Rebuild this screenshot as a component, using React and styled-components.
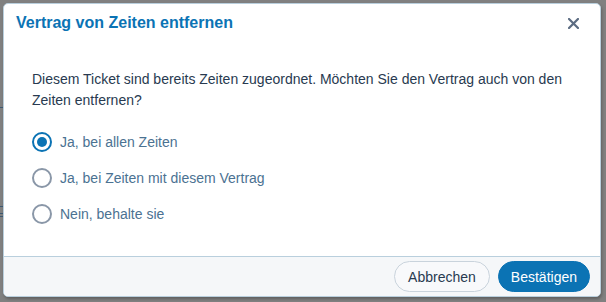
import React, { useState } from "react";
import styled, { createGlobalStyle } from "styled-components";

const Global = createGlobalStyle`
  html, body { margin: 0; padding: 0; }
  body {
    width: 606px; height: 302px; overflow: hidden;
    background: #808080;
    font-family: "Liberation Sans", Arial, sans-serif;
  }
`;

const Backdrop = styled.div`
  position: relative;
  width: 606px;
  height: 302px;
  box-sizing: border-box;
  padding: 3px 5px 5px 3px;
  display: flex;
`;

const Mark = styled.div`
  position: absolute;
  left: 0;
  width: 3px;
  height: 1px;
  background: #3d5870;
`;

const Dialog = styled.div`
  flex: 1;
  display: flex;
  flex-direction: column;
  background: #fff;
  border: 1px solid #b9cfdd;
  border-radius: 5px;
  overflow: hidden;
  box-shadow: 1px 2px 3px rgba(0, 0, 0, 0.25);
`;

const Header = styled.div`
  display: flex;
  align-items: center;
  justify-content: space-between;
  padding: 6px 20px 0 12px;
  height: 26px;
`;

const Title = styled.h2`
  margin: 0;
  font-size: 16px;
  font-weight: bold;
  color: #0b73b4;
`;

const Close = styled.button`
  border: 0;
  background: none;
  padding: 0;
  width: 14px;
  height: 14px;
  display: flex;
  align-items: center;
  justify-content: center;
  cursor: pointer;
`;

const Body = styled.div`
  flex: 1;
  padding: 33px 30px 0 28px;
`;

const Text = styled.p`
  margin: 0;
  font-size: 14px;
  line-height: 21px;
  color: #283a50;
`;

const Options = styled.div`
  display: flex;
  flex-direction: column;
  gap: 12px;
  margin-top: 19px;
`;

const Option = styled.label`
  display: flex;
  align-items: center;
  gap: 8px;
  height: 24px;
  font-size: 14px;
  color: #4b7292;
  cursor: pointer;
`;

const Circle = styled.span`
  box-sizing: border-box;
  width: 20px;
  height: 20px;
  border-radius: 50%;
  border: 2px solid ${(p) => (p.$on ? "#0b73b4" : "#8a97a8")};
  display: flex;
  align-items: center;
  justify-content: center;
  &::after {
    content: "";
    width: 10px;
    height: 10px;
    border-radius: 50%;
    background: ${(p) => (p.$on ? "#0b73b4" : "transparent")};
  }
`;

const Footer = styled.div`
  height: 39px;
  background: #f5f7f9;
  border-top: 1px solid #b9cfdd;
  display: flex;
  align-items: center;
  justify-content: flex-end;
  gap: 8px;
  padding: 0 10px 0 0;
`;

const Button = styled.button`
  height: 31px;
  border-radius: 16px;
  padding: 0 ${(p) => (p.$primary ? "12px" : "13px")};
  font-family: "Liberation Sans", Arial, sans-serif;
  font-size: 14px;
  border: 1px solid ${(p) => (p.$primary ? "#0b73b4" : "#c9d3dc")};
  background: ${(p) => (p.$primary ? "#0b73b4" : "#f8f9fb")};
  color: ${(p) => (p.$primary ? "#fff" : "#283a50")};
  cursor: pointer;
`;

const options = [
  "Ja, bei allen Zeiten",
  "Ja, bei Zeiten mit diesem Vertrag",
  "Nein, behalte sie",
];

export default function App() {
  const [sel, setSel] = useState(0);
  return (
    <>
      <Global />
      <Backdrop>
        <Mark style={{ top: 107 }} />
        <Mark style={{ top: 206 }} />
        <Mark style={{ top: 213 }} />
        <Mark style={{ top: 216 }} />
        <Dialog>
          <Header>
            <Title>Vertrag von Zeiten entfernen</Title>
            <Close aria-label="Schließen">
              <svg width="11" height="11" viewBox="0 0 11 11">
                <path d="M1 1L10 10M10 1L1 10" stroke="#5c6c82" strokeWidth="2.2" strokeLinecap="square" />
              </svg>
            </Close>
          </Header>
          <Body>
            <Text>
              Diesem Ticket sind bereits Zeiten zugeordnet. Möchten Sie den Vertrag auch von den Zeiten entfernen?
            </Text>
            <Options>
              {options.map((o, i) => (
                <Option key={o} onClick={() => setSel(i)}>
                  <Circle $on={sel === i} />
                  {o}
                </Option>
              ))}
            </Options>
          </Body>
          <Footer>
            <Button>Abbrechen</Button>
            <Button $primary>Bestätigen</Button>
          </Footer>
        </Dialog>
      </Backdrop>
    </>
  );
}
